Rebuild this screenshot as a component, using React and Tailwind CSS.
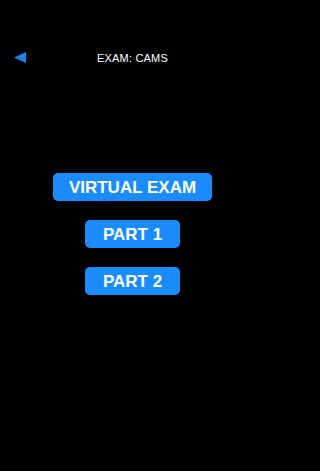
export default function App() {
    const font = { fontFamily: '"Liberation Sans", Arial, sans-serif' };
    return (
        <div className="min-h-screen w-full bg-black">
            <div className="w-[265px] h-[471px] bg-black text-white flex flex-col" style={font}>
                <div className="relative h-[24px] mt-[46px] flex items-center justify-center">
                    <button className="absolute left-[14px] top-[6px]">
                        <svg width="12" height="11" viewBox="0 0 12 11">
                            <polygon points="0,5.5 12,0 12,11" fill="#1a84f2" />
                        </svg>
                    </button>
                    <span className="text-[11px] font-medium tracking-[0.2px]">EXAM: CAMS</span>
                </div>
                <div className="flex flex-col items-center mt-[103px] gap-[19px]">
                    <button className="w-[159px] h-[28px] rounded-[5px] bg-[#1a8cff] text-[17px] font-bold leading-none">
                        VIRTUAL EXAM
                    </button>
                    <button className="w-[95px] h-[28px] rounded-[5px] bg-[#1a8cff] text-[17px] font-bold leading-none">
                        PART 1
                    </button>
                    <button className="w-[95px] h-[28px] rounded-[5px] bg-[#1a8cff] text-[17px] font-bold leading-none">
                        PART 2
                    </button>
                </div>
            </div>
        </div>
    );
}
